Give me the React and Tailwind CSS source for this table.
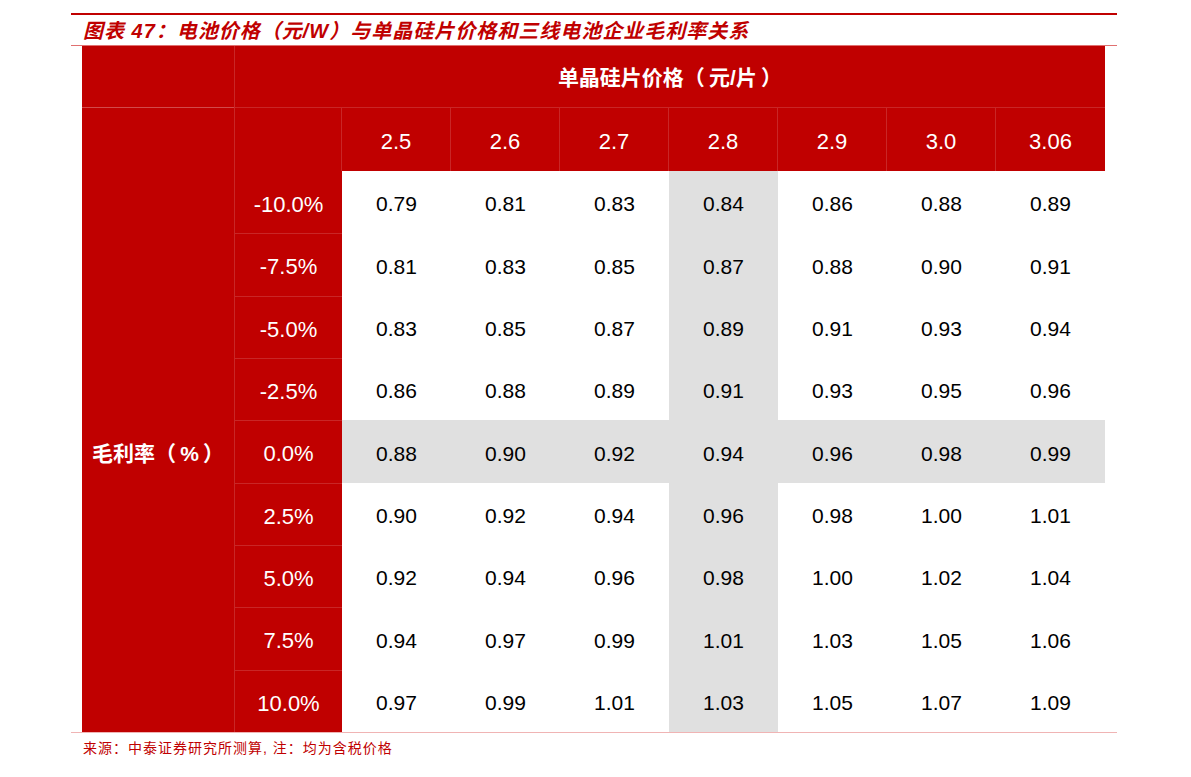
import React from 'react';

const cols = ['2.5', '2.6', '2.7', '2.8', '2.9', '3.0', '3.06'];

const rows = [
    { label: '-10.0%', values: ['0.79', '0.81', '0.83', '0.84', '0.86', '0.88', '0.89'] },
    { label: '-7.5%', values: ['0.81', '0.83', '0.85', '0.87', '0.88', '0.90', '0.91'] },
    { label: '-5.0%', values: ['0.83', '0.85', '0.87', '0.89', '0.91', '0.93', '0.94'] },
    { label: '-2.5%', values: ['0.86', '0.88', '0.89', '0.91', '0.93', '0.95', '0.96'] },
    { label: '0.0%', values: ['0.88', '0.90', '0.92', '0.94', '0.96', '0.98', '0.99'] },
    { label: '2.5%', values: ['0.90', '0.92', '0.94', '0.96', '0.98', '1.00', '1.01'] },
    { label: '5.0%', values: ['0.92', '0.94', '0.96', '0.98', '1.00', '1.02', '1.04'] },
    { label: '7.5%', values: ['0.94', '0.97', '0.99', '1.01', '1.03', '1.05', '1.06'] },
    { label: '10.0%', values: ['0.97', '0.99', '1.01', '1.03', '1.05', '1.07', '1.09'] },
];

const font = { fontFamily: "'Liberation Sans', 'Noto Sans CJK SC', sans-serif" };

const App = () => {
    return (
        <div className="w-[1191px] h-[777px] bg-white overflow-hidden" style={font}>
            <div className="ml-[71px] w-[1046px] pt-[13px]">
                {/* title */}
                <div className="h-[2px] bg-[#c00000]"></div>
                <div className="h-[31px] border-b border-[#e07070] flex items-center pl-[12px] pt-[2px]">
                    <span className="text-[20px] leading-none font-bold italic tracking-[1px] text-[#c00000]">
                        图表 47：电池价格（元/W）与单晶硅片价格和三线电池企业毛利率关系
                    </span>
                </div>

                {/* table */}
                <div className="ml-[11px] w-[1023px] h-[686px] grid grid-cols-[152px_108px_repeat(7,109px)] grid-rows-[62px_63px_repeat(9,1fr)] text-[21px]">
                    <div className="bg-[#c00000] border-b border-[#d24a4a]"></div>
                    <div className="col-span-8 bg-[#c00000] border-l border-b border-[#c92626] flex items-center justify-center pt-[3px] text-white font-bold">
                        单晶硅片价格（&thinsp;元/片&thinsp;）
                    </div>

                    <div className="bg-[#c00000]"></div>
                    <div className="bg-[#c00000] border-l border-r border-[#c92626]"></div>
                    {cols.map((c, i) => (
                        <div key={c} className={`bg-[#c00000] flex items-center justify-center pt-[4px] text-[22px] text-white ${i < cols.length - 1 ? 'border-r border-[#c92626]' : ''}`}>
                            {c}
                        </div>
                    ))}

                    <div className="col-start-1 row-start-3 row-span-9 bg-[#c00000] flex items-center justify-center pt-[4px] text-white font-bold">
                        毛利率（&thinsp;%&thinsp;）
                    </div>

                    {rows.map((r, ri) => (
                        <React.Fragment key={r.label}>
                            <div className={`col-start-2 bg-[#c00000] border-l border-[#c92626] flex items-center justify-center pt-[4px] text-[22px] text-white ${ri > 0 ? 'border-t' : ''}`}>
                                {r.label}
                            </div>
                            {r.values.map((v, ci) => {
                                const grey = ci === 3 || r.label === '0.0%';
                                return (
                                    <div key={ci} className={`flex items-center justify-center pt-[4px] text-black ${grey ? 'bg-[#e0e0e0]' : 'bg-white'}`}>
                                        {v}
                                    </div>
                                );
                            })}
                        </React.Fragment>
                    ))}
                </div>

                {/* source */}
                <div className="border-t border-[#f0b4b4]"></div>
                <div className="pl-[12px] pt-[6px] text-[14px] leading-[18px] tracking-[1px] text-[#c00000]">
                    来源：中泰证券研究所测算,&nbsp;注：均为含税价格
                </div>
            </div>
        </div>
    );
};

export default App;
